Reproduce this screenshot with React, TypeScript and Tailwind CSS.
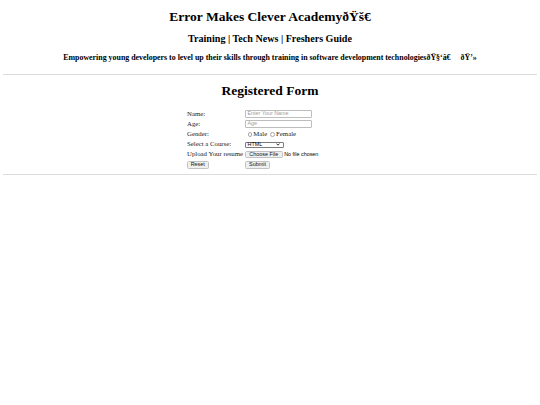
import React from "react";

const serif = { fontFamily: '"Liberation Serif", "Times New Roman", serif' };

function Btn({ children, w }: { children: React.ReactNode; w: string }) {
  return (
    <span
      className={`inline-flex items-center justify-center h-[7.5px] ${w} rounded-[1.5px] border border-[#c2c2c2] bg-[#efefef] text-[5.4px] leading-none text-[#111] font-['Liberation_Sans',Arial,sans-serif]`}
    >
      {children}
    </span>
  );
}

function Radio() {
  return (
    <span className="inline-block w-[4.8px] h-[4.8px] rounded-full border border-[#a8a8a8] bg-white mx-[1px]" />
  );
}

export default function App() {
  const label = "h-[10.2px] flex items-center text-[6.8px] leading-none text-[#1a1a1a]";
  const cell = "h-[10.2px] flex items-center";
  const input =
    "flex items-center h-[8px] w-[67px] border border-[#bdbdbd] rounded-[1px] px-[1.5px] text-[5.4px] leading-none text-[#a0a0a0] font-['Liberation_Sans',Arial,sans-serif]";
  return (
    <div className="w-[540px] h-[405px] bg-white text-black px-[3.4px] pt-[9px]" style={serif}>
      <h1 className="text-center text-[13.5px] leading-[15px] font-bold">Error Makes Clever AcademyðŸš€</h1>
      <h2 className="mt-[9.2px] text-center text-[10.1px] leading-[11.6px] font-bold">
        Training | Tech News | Freshers Guide
      </h2>
      <h3 className="mt-[8.7px] text-center text-[7.9px] leading-[9px] font-bold whitespace-nowrap">
        Empowering young developers to level up their skills through training in software development technologiesðŸ§‘â€
        <span className="inline-block w-[10px]" />
        ðŸ’»
      </h3>
      <div className="mt-[11.5px] h-px bg-[#dcdcdc]" />
      <h1 className="mt-[8.5px] text-center text-[13.5px] leading-[15px] font-bold">Registered Form</h1>
      <div className="mt-[10.4px] flex justify-center">
        <div className="grid grid-cols-[58px_108px]">
          <div className={label}>Name:</div>
          <div className={cell}>
            <span className={input}>Enter Your Name</span>
          </div>
          <div className={label}>Age:</div>
          <div className={cell}>
            <span className={input}>Age</span>
          </div>
          <div className={label}>Gender:</div>
          <div className={`${cell} text-[6.8px] leading-none pl-[1.5px] text-[#1a1a1a]`}>
            <Radio />
            <span>Male</span>
            <span className="w-[2px]" />
            <Radio />
            <span>Female</span>
          </div>
          <div className={label}>Select a Course:</div>
          <div className={cell}>
            <span className="flex items-center justify-between h-[6px] w-[38.5px] border border-[#7a7a7a] rounded-[1px] px-[1.5px] text-[5.4px] leading-none font-['Liberation_Sans',Arial,sans-serif]">
              <span>HTML</span>
              <svg width="4" height="3" viewBox="0 0 8 6" className="mr-[1px]">
                <path d="M1 1.2 L4 4.4 L7 1.2" fill="none" stroke="#000" strokeWidth="1.6" />
              </svg>
            </span>
          </div>
          <div className={`${label} whitespace-nowrap`}>Upload Your resume</div>
          <div className={`${cell} gap-[1.7px]`}>
            <Btn w="w-[37.5px]">Choose File</Btn>
            <span className="text-[5.4px] leading-none font-['Liberation_Sans',Arial,sans-serif] whitespace-nowrap">
              No file chosen
            </span>
          </div>
          <div className={label}>
            <Btn w="w-[21.5px]">Reset</Btn>
          </div>
          <div className={cell}>
            <Btn w="w-[25px]">Submit</Btn>
          </div>
        </div>
      </div>
      <div className="mt-[3.9px] h-px bg-[#dcdcdc]" />
    </div>
  );
}
